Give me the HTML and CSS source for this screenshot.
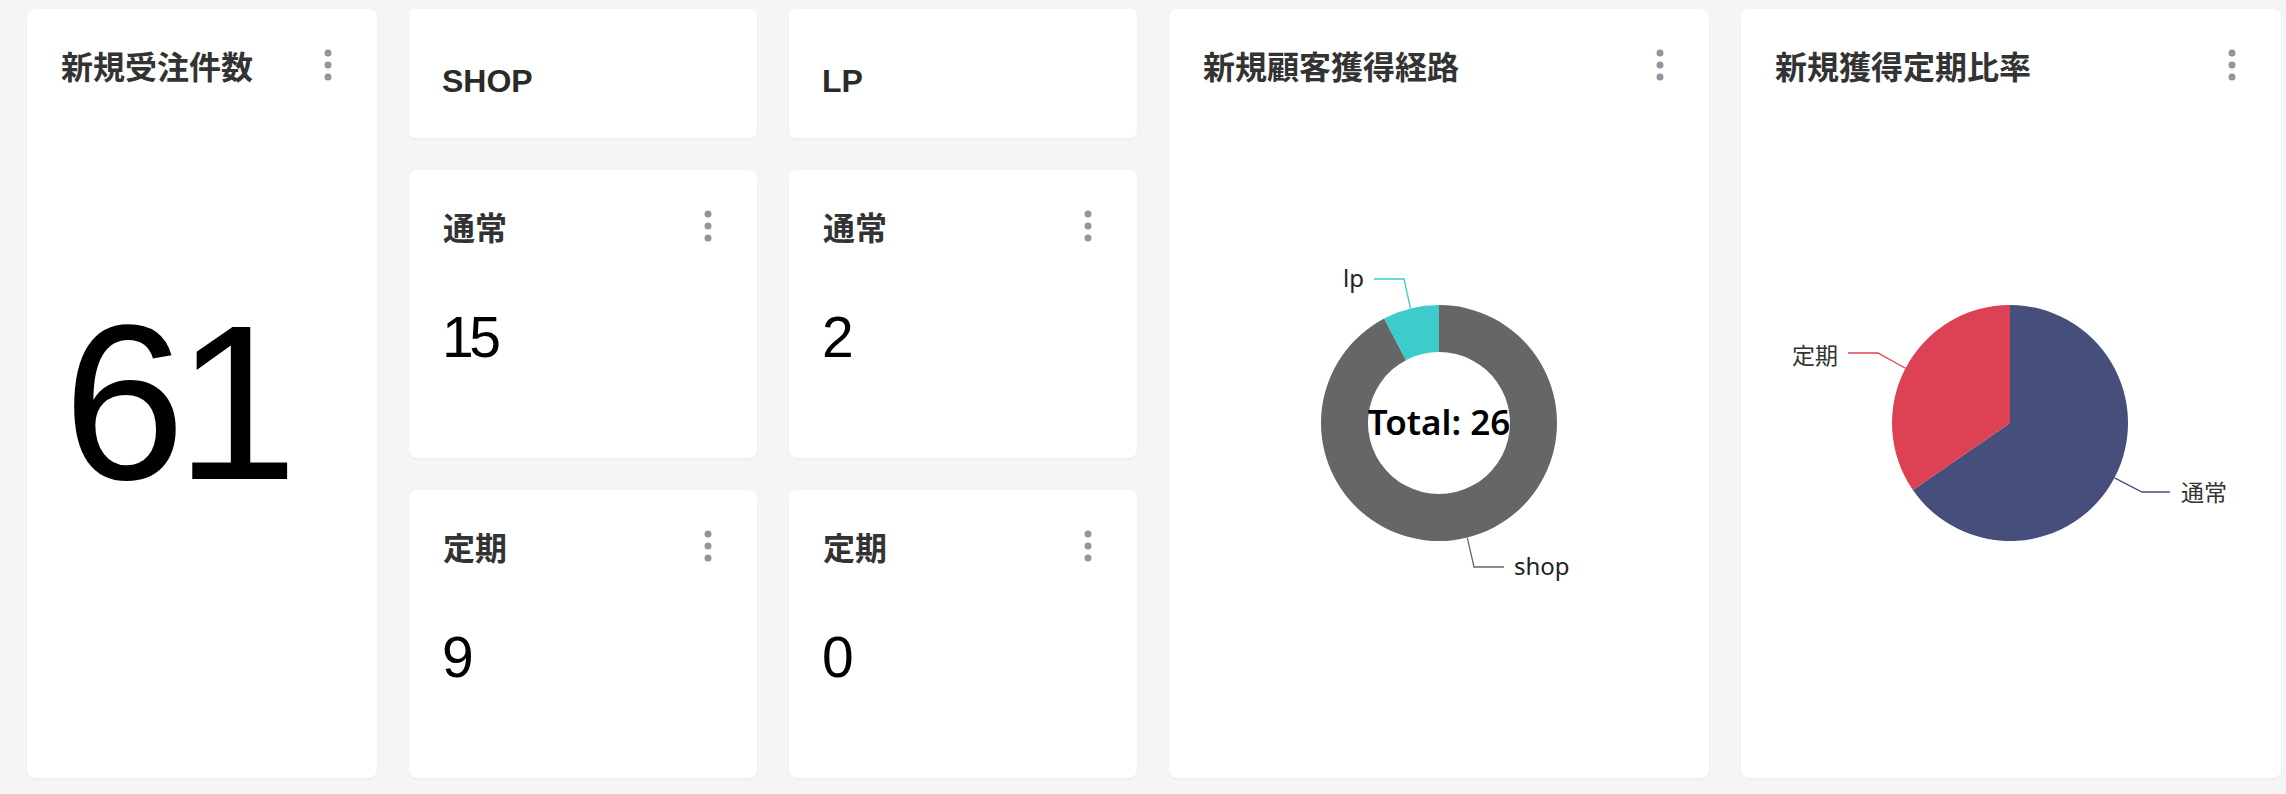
FILE: index.html
```html
<!DOCTYPE html>
<html lang="ja">
<head>
<meta charset="utf-8">
<title>Dashboard</title>
<link rel="stylesheet" href="styles.css">
</head>
<body>
<main class="dashboard">
  <section class="card card-total">
    <header class="card-head">
      <h2 class="card-title">新規受注件数</h2>
      <button class="kebab" aria-label="menu"><svg width="8" height="32" viewBox="0 0 8 32"><circle cx="4" cy="4" r="3.5"/><circle cx="4" cy="16" r="3.5"/><circle cx="4" cy="28" r="3.5"/></svg></button>
    </header>
    <div class="value value-big">61</div>
  </section>

  <section class="card card-channel col-shop">
    <h2 class="channel-title">SHOP</h2>
  </section>

  <section class="card card-channel col-lp">
    <h2 class="channel-title">LP</h2>
  </section>

  <section class="card card-stat col-shop row-normal">
    <header class="card-head">
      <h2 class="card-title">通常</h2>
      <button class="kebab" aria-label="menu"><svg width="8" height="32" viewBox="0 0 8 32"><circle cx="4" cy="4" r="3.5"/><circle cx="4" cy="16" r="3.5"/><circle cx="4" cy="28" r="3.5"/></svg></button>
    </header>
    <div class="value">15</div>
  </section>

  <section class="card card-stat col-lp row-normal">
    <header class="card-head">
      <h2 class="card-title">通常</h2>
      <button class="kebab" aria-label="menu"><svg width="8" height="32" viewBox="0 0 8 32"><circle cx="4" cy="4" r="3.5"/><circle cx="4" cy="16" r="3.5"/><circle cx="4" cy="28" r="3.5"/></svg></button>
    </header>
    <div class="value">2</div>
  </section>

  <section class="card card-stat col-shop row-sub">
    <header class="card-head">
      <h2 class="card-title">定期</h2>
      <button class="kebab" aria-label="menu"><svg width="8" height="32" viewBox="0 0 8 32"><circle cx="4" cy="4" r="3.5"/><circle cx="4" cy="16" r="3.5"/><circle cx="4" cy="28" r="3.5"/></svg></button>
    </header>
    <div class="value">9</div>
  </section>

  <section class="card card-stat col-lp row-sub">
    <header class="card-head">
      <h2 class="card-title">定期</h2>
      <button class="kebab" aria-label="menu"><svg width="8" height="32" viewBox="0 0 8 32"><circle cx="4" cy="4" r="3.5"/><circle cx="4" cy="16" r="3.5"/><circle cx="4" cy="28" r="3.5"/></svg></button>
    </header>
    <div class="value">0</div>
  </section>

  <section class="card card-chart card-route">
    <header class="card-head">
      <h2 class="card-title">新規顧客獲得経路</h2>
      <button class="kebab" aria-label="menu"><svg width="8" height="32" viewBox="0 0 8 32"><circle cx="4" cy="4" r="3.5"/><circle cx="4" cy="16" r="3.5"/><circle cx="4" cy="28" r="3.5"/></svg></button>
    </header>
    <div class="chart">
      <svg class="chart-svg" width="540" height="697" viewBox="0 0 540 697">
        <path class="slice-shop" d="M270 224 A118 118 0 1 1 215.17 237.51 L237.01 279.13 A71 71 0 1 0 270 271 Z"/>
        <path class="slice-lp" d="M215.17 237.51 A118 118 0 0 1 270 224 L270 271 A71 71 0 0 0 237.01 279.13 Z"/>
        <polyline class="line-lp" points="241.5,227.5 235,198 205,198"/>
        <polyline class="line-shop" points="298.3,456.6 305,486 335,486"/>
        <text class="label-latin" x="195" y="206" text-anchor="end">lp</text>
        <text class="label-latin" x="345" y="494">shop</text>
        <text class="total" x="270" y="354" text-anchor="middle">Total: 26</text>
      </svg>
    </div>
  </section>

  <section class="card card-chart card-ratio">
    <header class="card-head">
      <h2 class="card-title">新規獲得定期比率</h2>
      <button class="kebab" aria-label="menu"><svg width="8" height="32" viewBox="0 0 8 32"><circle cx="4" cy="4" r="3.5"/><circle cx="4" cy="16" r="3.5"/><circle cx="4" cy="28" r="3.5"/></svg></button>
    </header>
    <div class="chart">
      <svg class="chart-svg" width="540" height="697" viewBox="0 0 540 697">
        <path class="slice-normal" d="M269 342 L269 224 A118 118 0 1 1 171.9 409.04 Z"/>
        <path class="slice-sub" d="M269 342 L171.9 409.04 A118 118 0 0 1 269 224 Z"/>
        <polyline class="line-sub" points="164.5,287.2 137,272 107,272"/>
        <polyline class="line-normal" points="373.5,396.8 401,411 429,411"/>
        <text class="label-cjk" x="97" y="283" text-anchor="end">定期</text>
        <text class="label-cjk" x="440" y="420">通常</text>
      </svg>
    </div>
  </section>
</main>
</body>
</html>
```
FILE: styles.css
```css
* {
  box-sizing: border-box;
  margin: 0;
  padding: 0;
}

html, body {
  background: #f5f5f5;
}

body {
  font-family: "Liberation Sans", "Noto Sans CJK JP", sans-serif;
  color: #333;
  width: 2286px;
  height: 794px;
  overflow: hidden;
}

.dashboard {
  display: grid;
  grid-template-columns: 350px 348px 348px 540px 540px;
  grid-template-rows: 129px 288px 288px;
  gap: 32px;
  padding: 9px 0 0 27px;
}

.card {
  background: #fff;
  border-radius: 8px;
  box-shadow: 0 1px 2px rgba(0, 0, 0, 0.05);
  display: flex;
  flex-direction: column;
  overflow: hidden;
}

.card-total { grid-column: 1; grid-row: 1 / 4; }
.col-shop { grid-column: 2; }
.col-lp { grid-column: 3; }
.card-channel { grid-row: 1; border-radius: 6px; }
.row-normal { grid-row: 2; }
.row-sub { grid-row: 3; }
.card-route { grid-column: 4; grid-row: 1 / 4; }
.card-ratio { grid-column: 5; grid-row: 1 / 4; }

.card-head {
  display: flex;
  justify-content: space-between;
  align-items: center;
  height: 72px;
  padding: 40px 45px 0 34px;
  flex: none;
}

.card-title {
  font-family: "Noto Sans CJK JP", sans-serif;
  font-weight: 700;
  font-size: 32px;
  line-height: 32px;
  color: #333;
  white-space: nowrap;
}

.kebab {
  border: 0;
  background: none;
  width: 8px;
  height: 32px;
  display: block;
}

.kebab svg {
  display: block;
  fill: #8f969d;
}

.channel-title {
  font-family: "Liberation Sans", sans-serif;
  font-weight: 700;
  font-size: 32px;
  line-height: 32px;
  color: #2a2a2a;
  padding: 56px 0 0 33px;
}

.value {
  font-family: "Liberation Sans", sans-serif;
  font-weight: 400;
  font-size: 57px;
  line-height: 1;
  letter-spacing: -0.08em;
  color: #000;
  padding-left: 33px;
  margin-top: 67px;
}

.value-big {
  font-size: 220px;
  letter-spacing: -0.045em;
  margin-top: 212px;
  padding-left: 36px;
}

.chart {
  flex: 1;
}

.chart-svg {
  display: block;
}

.slice-shop { fill: #666666; }
.slice-lp { fill: #3ecbcb; }
.slice-normal { fill: #464e7c; }
.slice-sub { fill: #dd4154; }

.line-lp, .line-shop, .line-sub, .line-normal {
  fill: none;
  stroke-width: 1.3;
}
.line-lp { stroke: #3ecbcb; }
.line-shop { stroke: #666666; }
.line-sub { stroke: #dd4154; }
.line-normal { stroke: #464e7c; }

.label-latin {
  font-family: "Noto Sans", sans-serif;
  font-size: 24px;
  fill: #222;
}

.label-cjk {
  font-family: "Noto Sans CJK JP", sans-serif;
  font-size: 23px;
  fill: #333;
}

.total {
  font-family: "Noto Sans", sans-serif;
  font-weight: 600;
  font-size: 35px;
  fill: #000;
}
```
